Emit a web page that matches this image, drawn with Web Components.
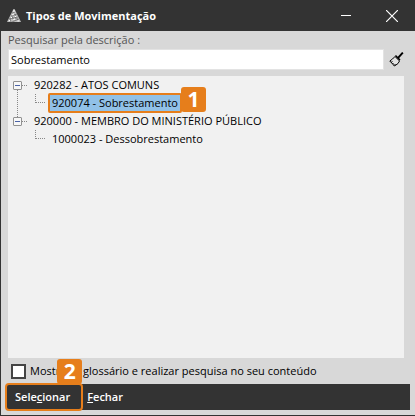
<!DOCTYPE html>
<html lang="pt-BR">
<head>
<meta charset="utf-8">
<title>Tipos de Movimentação</title>
<style>
  html, body {
    height: 100%;
    margin: 0;
  }

  body {
    font: 11px/18px "Open Sans", "Noto Sans", sans-serif;
    color: #000;
  }
</style>
</head>
<body>
<app-window heading="Tipos de Movimentação">
  <search-field label="Pesquisar pela descrição :" value="Sobrestamento"></search-field>
  <tree-view>
    <tree-node label="920282 - ATOS COMUNS">
      <tree-node label="920074 - Sobrestamento" leaf selected step="1"></tree-node>
    </tree-node>
    <tree-node label="920000 - MEMBRO DO MINISTÉRIO PÚBLICO" last>
      <tree-node label="1000023 - Dessobrestamento" leaf></tree-node>
    </tree-node>
  </tree-view>
  <check-option>Mostrar o glossário e realizar pesquisa no seu conteúdo</check-option>
  <action-bar slot="footer">
    <action-button highlighted step="2">Sele<u>c</u>ionar</action-button>
    <action-button><u>F</u>echar</action-button>
  </action-bar>
</app-window>

<script>
/**
 * Creates a template from markup.
 *
 * @param {string} html - The markup.
 * @returns {HTMLTemplateElement} The template.
 */
const createTemplate = (html) => {
  const template = document.createElement('template')
  template.innerHTML = html
  return template
}

const windowTemplate = createTemplate(`
<style>
  :host {
    display: flex;
    flex-direction: column;
    box-sizing: border-box;
    min-height: 100%;
    background: #d8d8d8;
    border: solid #333;
    border-width: 0 0 1px 1px;
  }
  header {
    display: flex;
    align-items: center;
    height: 31px;
    padding-left: 6px;
    background: #333;
    color: #fff;
  }
  h1 {
    flex: 1;
    margin: 0 0 0 5px;
    font-size: 11px;
    font-weight: 700;
  }
  header button {
    width: 46px;
    height: 31px;
    padding: 0;
    border: 0;
    background: none;
    color: #fff;
  }
  svg {
    display: block;
    margin: 0 auto;
  }
  header > svg {
    margin: 0;
  }
  main {
    flex: 1;
    display: flex;
    flex-direction: column;
    padding: 0 11px 0 7px;
  }
  footer {
    padding: 0 5px 5px;
  }
</style>
<header>
  <svg width="14" height="14" viewBox="0 0 14 14" aria-hidden="true">
    <path d="M6.500 0H7.500L14 13H0z" fill="#bdbdbd"/>
    <path d="M5 4 8 3M4 7 10 5M2 10 11 8M5 13 12 10M8 5 9 10M5 7 7 12M3 9 4 13M10 9 11 13" fill="none" stroke="#555" stroke-width=".6"/>
    <path d="M7 1V3M5 6 7 5M8 7 9 8M4 9 5 8M6 11 8 10M2 12 3 11M10 12 12 12" fill="none" stroke="#fff"/>
  </svg>
  <h1></h1>
  <button type="button" aria-label="Minimizar">
    <svg width="12" height="12" viewBox="0 0 12 12"><path d="M1 5.500H11" stroke="currentColor"/></svg>
  </button>
  <button type="button" aria-label="Fechar janela">
    <svg width="12" height="12" viewBox="0 0 12 12"><path d="M0 0 12 12M12 0 0 12" stroke="currentColor" stroke-width="1.2"/></svg>
  </button>
</header>
<main><slot></slot></main>
<footer><slot name="footer"></slot></footer>
`)

customElements.define('app-window',
  /**
   * Represents a window with a title bar.
   */
  class extends HTMLElement {
    /**
     * Creates an instance of the current type.
     */
    constructor () {
      super()
      this.attachShadow({ mode: 'open' })
        .appendChild(windowTemplate.content.cloneNode(true))
    }

    /**
     * Called after the element is inserted into the DOM.
     */
    connectedCallback () {
      this.shadowRoot.querySelector('h1').textContent = this.getAttribute('heading')
    }
  }
)

const searchTemplate = createTemplate(`
<style>
  :host {
    display: block;
  }
  label {
    display: block;
    color: #555;
  }
  div {
    display: flex;
    align-items: center;
    gap: 5px;
  }
  input {
    flex: 1;
    min-width: 0;
    box-sizing: border-box;
    height: 21px;
    padding: 0 2px;
    border: 1px solid #e3e3e3;
    background: #fff;
    color: #000;
    font: inherit;
    outline: 0;
  }
  button {
    padding: 0;
    border: 0;
    background: none;
  }
  svg {
    display: block;
  }
</style>
<label for="query"></label>
<div>
  <input type="text" id="query">
  <button type="button" aria-label="Limpar">
    <svg width="15" height="15" viewBox="0 0 15 15">
      <path d="M9.500 5.500 13.200 1.300" stroke="#000" stroke-width="1.900" stroke-linecap="square"/>
      <path d="M6 4.500 10.500 9 9 11.500 5.500 14 .800 9 3.500 7z" fill="#e2e2e2" stroke="#000"/>
      <path d="M6.500 3.500 11 8" stroke="#000" stroke-width="1.500"/>
      <path d="M2 10.500 3.500 9.500M3.500 12 4.500 11M5 13.500 6.500 12" stroke="#000"/>
    </svg>
  </button>
</div>
`)

customElements.define('search-field',
  /**
   * Represents a labelled search box with a clear button.
   */
  class extends HTMLElement {
    /**
     * Creates an instance of the current type.
     */
    constructor () {
      super()
      this.attachShadow({ mode: 'open' })
        .appendChild(searchTemplate.content.cloneNode(true))
    }

    /**
     * Called after the element is inserted into the DOM.
     */
    connectedCallback () {
      const input = this.shadowRoot.querySelector('input')
      this.shadowRoot.querySelector('label').textContent = this.getAttribute('label')
      input.value = this.getAttribute('value') ?? ''
      this.shadowRoot.querySelector('button').addEventListener('click', () => {
        input.value = ''
        input.focus()
      })
    }
  }
)

const treeTemplate = createTemplate(`
<style>
  :host {
    display: block;
    flex: 1;
    margin-top: 6px;
    background: #f1f1f1;
  }
</style>
<slot></slot>
`)

customElements.define('tree-view',
  /**
   * Represents the tree panel.
   */
  class extends HTMLElement {
    /**
     * Creates an instance of the current type.
     */
    constructor () {
      super()
      this.attachShadow({ mode: 'open' })
        .appendChild(treeTemplate.content.cloneNode(true))
    }

    /**
     * Called after the element is inserted into the DOM.
     */
    connectedCallback () {
      this.setAttribute('role', 'tree')
    }
  }
)

const nodeTemplate = createTemplate(`
<style>
  :host {
    display: block;
    position: relative;
    padding-left: 5px;
  }
  :host([leaf]) {
    padding-left: 22px;
  }
  /* Dotted trunk down to the next sibling. */
  :host(:not([leaf]):not([last]))::before {
    content: "";
    position: absolute;
    left: 9px;
    top: 14px;
    bottom: -5px;
    border-left: 1px dotted #888;
  }
  .row {
    display: flex;
    align-items: center;
    height: 18px;
  }
  .toggle {
    box-sizing: border-box;
    width: 9px;
    height: 9px;
    padding: 0;
    border: 1px solid #919191;
    border-radius: 1px;
    background: linear-gradient(#4b63a7, #4b63a7) center / 5px 1px no-repeat #f7f7f7;
  }
  .dash {
    width: 5px;
    border-top: 1px dotted #888;
  }
  .label {
    padding: 0 3px 0 7px;
    white-space: nowrap;
  }
  :host([leaf]) .dash {
    box-sizing: border-box;
    width: 10px;
    height: 9px;
    align-self: flex-start;
    border: dotted #888;
    border-width: 0 0 1px 1px;
  }
  :host([leaf]) .label {
    margin-left: 4px;
    padding-left: 3px;
  }
  :host([selected]) .label {
    background: #91c1e7;
    outline: 2px solid #e67e1b;
    outline-offset: -1px;
    border-radius: 1px;
  }
</style>
<div class="row">
  <button class="toggle" type="button" aria-label="Recolher"></button>
  <span class="dash"></span>
  <span class="label"></span>
</div>
<slot></slot>
`)

customElements.define('tree-node',
  /**
   * Represents a node of the tree.
   */
  class extends HTMLElement {
    /**
     * Creates an instance of the current type.
     */
    constructor () {
      super()
      this.attachShadow({ mode: 'open' })
        .appendChild(nodeTemplate.content.cloneNode(true))
    }

    /**
     * Called after the element is inserted into the DOM.
     */
    connectedCallback () {
      this.setAttribute('role', 'treeitem')
      this.shadowRoot.querySelector('.label').textContent = this.getAttribute('label')
      if (this.hasAttribute('leaf')) {
        this.shadowRoot.querySelector('.toggle').remove()
      }
      if (this.hasAttribute('step')) {
        const badge = document.createElement('step-badge')
        badge.textContent = this.getAttribute('step')
        this.shadowRoot.querySelector('.row').append(badge)
      }
    }
  }
)

const badgeTemplate = createTemplate(`
<style>
  :host {
    flex: none;
    align-self: flex-end;
    width: 25px;
    height: 25px;
    border-radius: 3px;
    background: #e67e1b;
    color: #fff;
    font-size: 21px;
    font-weight: 700;
    line-height: 25px;
    text-align: center;
  }
</style>
<slot></slot>
`)

customElements.define('step-badge',
  /**
   * Represents a numbered step marker.
   */
  class extends HTMLElement {
    /**
     * Creates an instance of the current type.
     */
    constructor () {
      super()
      this.attachShadow({ mode: 'open' })
        .appendChild(badgeTemplate.content.cloneNode(true))
    }
  }
)

const checkTemplate = createTemplate(`
<style>
  :host {
    display: block;
    padding: 4px 3px;
  }
  label {
    display: flex;
    align-items: center;
    gap: 4px;
  }
  input {
    appearance: none;
    flex: none;
    box-sizing: border-box;
    width: 15px;
    height: 15px;
    margin: 0;
    border: 2px solid #444;
    background: #fff;
  }
  input:checked {
    background: #444;
    box-shadow: inset 0 0 0 2px #fff;
  }
</style>
<label><input type="checkbox"><span><slot></slot></span></label>
`)

customElements.define('check-option',
  /**
   * Represents a tick box with its label.
   */
  class extends HTMLElement {
    /**
     * Creates an instance of the current type.
     */
    constructor () {
      super()
      this.attachShadow({ mode: 'open' })
        .appendChild(checkTemplate.content.cloneNode(true))
    }
  }
)

const barTemplate = createTemplate(`
<style>
  :host {
    display: flex;
    height: 26px;
    background: #333;
    color: #fff;
  }
</style>
<slot></slot>
`)

customElements.define('action-bar',
  /**
   * Represents the bar of actions.
   */
  class extends HTMLElement {
    /**
     * Creates an instance of the current type.
     */
    constructor () {
      super()
      this.attachShadow({ mode: 'open' })
        .appendChild(barTemplate.content.cloneNode(true))
    }
  }
)

const buttonTemplate = createTemplate(`
<style>
  :host {
    display: block;
    position: relative;
  }
  button {
    height: 26px;
    padding: 0 5px;
    border: 0;
    background: none;
    color: inherit;
    font: inherit;
    font-weight: 600;
  }
  :host([highlighted]) button {
    padding: 0 12px 0 9px;
    outline: 2px solid #e67e1b;
    outline-offset: -1px;
    border-radius: 3px;
  }
  step-badge {
    position: absolute;
    right: 0;
    bottom: 100%;
  }
</style>
<button type="button"><slot></slot></button>
`)

customElements.define('action-button',
  /**
   * Represents a button of the action bar.
   */
  class extends HTMLElement {
    /**
     * Creates an instance of the current type.
     */
    constructor () {
      super()
      this.attachShadow({ mode: 'open' })
        .appendChild(buttonTemplate.content.cloneNode(true))
    }

    /**
     * Called after the element is inserted into the DOM.
     */
    connectedCallback () {
      if (this.hasAttribute('step')) {
        const badge = document.createElement('step-badge')
        badge.textContent = this.getAttribute('step')
        this.shadowRoot.append(badge)
      }
    }
  }
)
</script>
</body>
</html>
